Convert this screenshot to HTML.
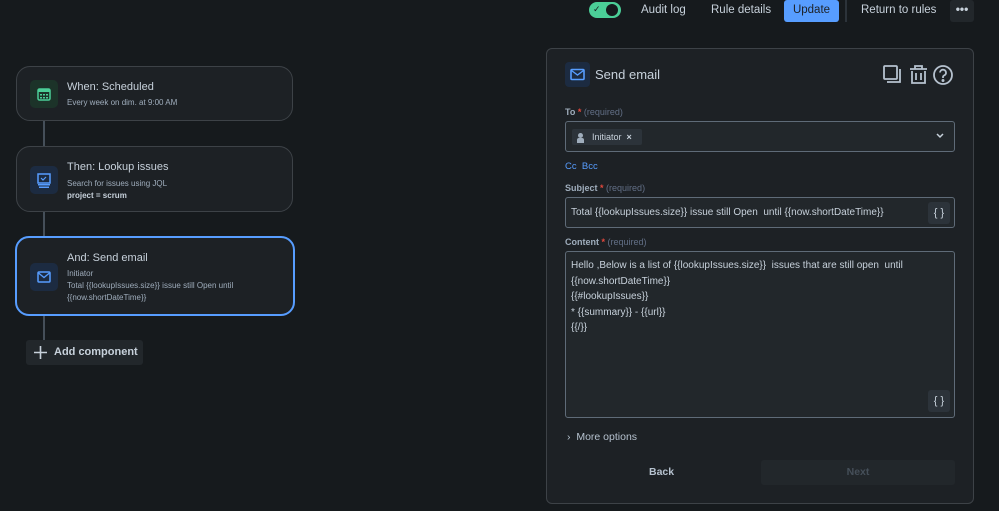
<!DOCTYPE html>
<html><head><meta charset="utf-8"><style>
*{box-sizing:border-box;margin:0;padding:0}
body{width:999px;height:511px;overflow:hidden;background:#161a1d;font-family:"Liberation Sans",sans-serif;color:#b6c2cf;position:relative}
.a{position:absolute}
.card{position:absolute;left:16px;width:277px;border:1px solid #3d4247;border-radius:14px;background:#1d2125}
.card .ic{position:absolute;left:13px;width:28px;height:28px;border-radius:5px}
.card .t{position:absolute;left:50px;font-size:11px;color:#c7d1db}
.card .s{position:absolute;left:50px;font-size:8px;color:#9fadbc;line-height:12px}
.lbl{position:absolute;left:565px;font-size:9px;font-weight:bold;color:#9fadbc}
.lbl i{color:#e2483d;font-style:normal}.lbl span{color:#626f86;font-weight:normal}
.inp{position:absolute;left:565px;width:390px;border:1px solid #5f6b78;border-radius:3px;background:#22272b}
.br{position:absolute;right:4px;width:22px;height:22px;background:#2c333a;border-radius:3px;color:#c7d1db;font-size:11px;text-align:center;line-height:22px}
</style></head><body>
<div class="a" style="left:589px;top:2px;width:32px;height:16px;border-radius:8px;background:#4bce97"></div>
<div class="a" style="left:593px;top:4px;font-size:9px;color:#161a1d">✓</div>
<div class="a" style="left:606px;top:4px;width:12px;height:12px;border-radius:6px;background:#161a1d"></div>
<div class="a" style="left:641px;top:4px;font-size:11.5px;color:#c7d1db">Audit log</div>
<div class="a" style="left:711px;top:4px;font-size:11.5px;color:#c7d1db">Rule details</div>
<div class="a" style="left:784px;top:0;width:55px;height:22px;background:#579dff;border-radius:3px;color:#1d2125;font-size:11.5px;text-align:center;line-height:21px">Update</div>
<div class="a" style="left:845px;top:0;width:2px;height:22px;background:#2c333a"></div>
<div class="a" style="left:861px;top:4px;font-size:11.5px;color:#c7d1db">Return to rules</div>
<div class="a" style="left:950px;top:0;width:24px;height:22px;background:#22272b;border-radius:3px;color:#c7d1db;text-align:center;font-size:12px;line-height:18px;font-weight:bold">•••</div>
<div class="a" style="left:43px;top:120px;width:2px;height:220px;background:#454f59"></div>
<div class="card" style="top:66px;height:55px">
<div class="ic" style="top:13px;background:#1c3329"><svg width="28" height="28"><rect x="8" y="9" width="12" height="11" rx="1.5" fill="none" stroke="#4bce97" stroke-width="1.5"/><rect x="8" y="9" width="12" height="3" fill="#4bce97"/><g fill="#4bce97"><rect x="10" y="14" width="2" height="1.5"/><rect x="13" y="14" width="2" height="1.5"/><rect x="16" y="14" width="2" height="1.5"/><rect x="10" y="17" width="2" height="1.5"/><rect x="13" y="17" width="2" height="1.5"/><rect x="16" y="17" width="2" height="1.5"/></g></svg></div>
<div class="t" style="top:14px">When: Scheduled</div><div class="s" style="top:30px">Every week on dim. at 9:00 AM</div></div>
<div class="card" style="top:146px;height:66px">
<div class="ic" style="top:19px;background:#1c2b41"><svg width="28" height="28"><rect x="8" y="8" width="12" height="9" fill="none" stroke="#579dff" stroke-width="1.5"/><path d="M11 12l2 2 3-3" stroke="#579dff" fill="none" stroke-width="1.2"/><rect x="8" y="18" width="12" height="1.5" fill="#579dff"/><rect x="9" y="20.5" width="10" height="1.5" fill="#579dff"/></svg></div>
<div class="t" style="top:14px">Then: Lookup issues</div><div class="s" style="top:31px">Search for issues using JQL<br><b style="color:#c7d1db">project = scrum</b></div></div>
<div class="card" style="top:236px;height:80px;border:2px solid #579dff;left:15px;width:280px">
<div class="ic" style="top:25px;background:#1c2b41"><svg width="28" height="28"><rect x="8" y="9" width="12" height="10" rx="1" fill="none" stroke="#579dff" stroke-width="1.5"/><path d="M8.5 10l5.5 4.5 5.5-4.5" fill="none" stroke="#579dff" stroke-width="1.3"/></svg></div>
<div class="t" style="top:14px">And: Send email</div><div class="s" style="top:30px">Initiator<br>Total {{lookupIssues.size}} issue still Open until<br>{{now.shortDateTime}}</div></div>
<div class="a" style="left:26px;top:340px;width:117px;height:25px;background:#22272b;border-radius:3px;font-size:11px;font-weight:bold;color:#c7d1db;line-height:25px;padding-left:28px">Add component</div>
<svg class="a" style="left:33px;top:345px" width="15" height="15" stroke="#c7d1db" stroke-width="1.6"><path d="M7.5 1v13M1 7.5h13"/></svg>
<div class="a" style="left:546px;top:48px;width:428px;height:456px;border:1px solid #3d4247;border-radius:6px;background:#1d2125"></div>
<div class="a" style="left:565px;top:62px;width:25px;height:25px;background:#1c2b41;border-radius:4px"><svg width="25" height="25"><rect x="6" y="7.5" width="13" height="10" rx="1" fill="none" stroke="#579dff" stroke-width="1.6"/><path d="M6.5 8.5l6 4.5 6-4.5" fill="none" stroke="#579dff" stroke-width="1.4"/></svg></div>
<div class="a" style="left:595px;top:67px;font-size:13px;color:#c7d1db">Send email</div>
<svg class="a" style="left:882px;top:63px" width="75" height="24" fill="none" stroke="#b6c2cf" stroke-width="1.8"><rect x="2" y="3" width="13" height="13" rx="1"/><path d="M5 19h13V6"/><path d="M28 6h17M33 6V3h7v3M30 8v12h13V8M34 10v7M39 10v7"/><circle cx="61" cy="12" r="9"/><path d="M58 9.5a3 3 0 1 1 4 3c-1 .5-1 1-1 2.5"/><circle cx="61" cy="17.5" r=".6" fill="#b6c2cf"/></svg>
<div class="lbl" style="top:107px">To <i>*</i> <span>(required)</span></div>
<div class="inp" style="top:121px;height:31px"><div class="a" style="left:6px;top:7px;width:70px;height:16px;background:#2c333a;border-radius:2px;font-size:9px;color:#c7d1db;line-height:16px;padding-left:20px">Initiator&nbsp;&nbsp;<b>×</b></div><div class="a" style="left:12px;top:11px;width:5px;height:5px;border-radius:3px;background:#9fadbc"></div><div class="a" style="left:11px;top:16px;width:7px;height:5px;border-radius:2px 2px 0 0;background:#9fadbc"></div><svg class="a" style="right:10px;top:11px" width="8" height="6" fill="none" stroke="#c7d1db" stroke-width="1.5"><path d="M1 1l3 3 3-3"/></svg></div>
<div class="a" style="left:565px;top:161px;font-size:9.5px;color:#579dff">Cc&nbsp;&nbsp;Bcc</div>
<div class="lbl" style="top:183px">Subject <i>*</i> <span>(required)</span></div>
<div class="inp" style="top:197px;height:31px"><div class="a" style="left:5px;top:9px;font-size:10px;color:#c7d1db;white-space:nowrap">Total {{lookupIssues.size}} issue still Open&nbsp; until {{now.shortDateTime}}</div><div class="br" style="top:4px">{ }</div></div>
<div class="lbl" style="top:237px">Content <i>*</i> <span>(required)</span></div>
<div class="inp" style="top:251px;height:167px"><div class="a" style="left:5px;top:6px;font-size:10px;color:#c7d1db;line-height:15.6px;white-space:nowrap">Hello ,Below is a list of {{lookupIssues.size}}&nbsp; issues that are still open&nbsp; until<br>{{now.shortDateTime}}<br>{{#lookupIssues}}<br>* {{summary}} - {{url}}<br>{{/}}</div><div class="br" style="top:138px">{ }</div></div>
<div class="a" style="left:567px;top:431px;font-size:10.5px;color:#b6c2cf">›&nbsp; More options</div>
<div class="a" style="left:649px;top:466px;font-size:10.5px;font-weight:bold;color:#b6c2cf">Back</div>
<div class="a" style="left:761px;top:460px;width:194px;height:25px;background:#22272b;border-radius:3px;font-size:10.5px;font-weight:bold;color:#454f59;text-align:center;line-height:25px">Next</div>
</body></html>
